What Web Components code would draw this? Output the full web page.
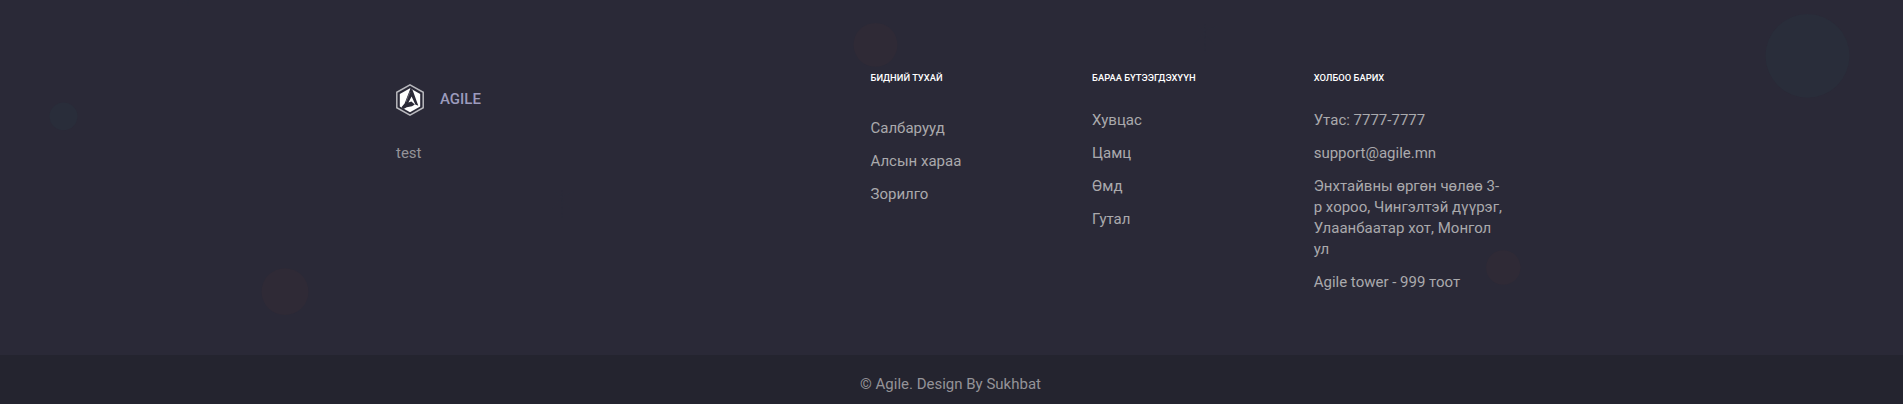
<!DOCTYPE html>
<html lang="mn"><head><meta charset="utf-8"><title>Agile</title>
<style>body{margin:0;background:#2a2937;font-family:Roboto,sans-serif;overflow:hidden}</style></head>
<body>
<agile-footer>
  <agile-brand slot="brand" name="AGILE">test</agile-brand>
  <footer-column slot="links" class="about" heading="Бидний тухай" style="--gap:33px">
    <footer-item>Салбарууд</footer-item><footer-item>Алсын хараа</footer-item><footer-item>Зорилго</footer-item>
  </footer-column>
  <footer-column slot="links" heading="Бараа бүтээгдэхүүн">
    <footer-item>Хувцас</footer-item><footer-item>Цамц</footer-item><footer-item>Өмд</footer-item><footer-item>Гутал</footer-item>
  </footer-column>
  <footer-column slot="links" heading="Холбоо барих">
    <footer-item>Утас: 7777-7777</footer-item><footer-item>support@agile.mn</footer-item><footer-item>Энхтайвны өргөн чөлөө 3-р хороо, Чингэлтэй дүүрэг, Улаанбаатар хот, Монгол ул</footer-item><footer-item>Agile tower - 999 тоот</footer-item>
  </footer-column>
  <span slot="copyright">© Agile. Design By Sukhbat</span>
</agile-footer>
<script>
const define = (name, html, setup) => customElements.define(name, class extends HTMLElement {
  constructor() {
    super();
    const t = document.createElement('template');
    t.innerHTML = html;
    this.attachShadow({mode: 'open'}).append(t.content.cloneNode(true));
  }
  connectedCallback() { if (setup) setup(this, this.shadowRoot); }
});

define('footer-backdrop', `<style>:host{position:absolute;inset:0;z-index:0}svg{display:block;width:100%;height:100%}</style>
<svg viewBox="0 0 1903 356" preserveAspectRatio="none">
<g fill="#2f2a36"><circle cx="285" cy="292.5" r="23.5"/><circle cx="875.5" cy="45" r="22"/><circle cx="1503.3" cy="268.3" r="17.3"/></g>
<g fill="#292d3a"><circle cx="63.5" cy="116.7" r="14"/><circle cx="1807.5" cy="56" r="42"/></g>
<g fill="none" stroke="#292b39" stroke-dasharray="1 1.6">
<path id="r" d="M562 191v27M561 199l-10 11M561 199l10 11M561 197l-8-6M561 197l14-5"/>
<use href="#r" x="643" y="-166"/><path d="M188 0v6M186 0l-4 4"/></g></svg>`);

define('agile-brand', `<style>:host{display:block}.top{display:flex;align-items:center;gap:16px;height:32px}
svg{width:28px;height:32px;flex:none}b{font-weight:500;font-size:15px;line-height:21px;color:#9c9bbd;position:relative;top:-1px}
p{margin:27px 0 0;font-size:15px;line-height:21px;color:#949398}</style>
<div class="top"><svg viewBox="0 0 28 32"><path d="M14 .9 27.2 8.3V23.7L14 31.1.8 23.7V8.3Z" fill="#2a2937" stroke="#b9b9be" stroke-width="1.5"/>
<path d="M14 4.2 24.2 9.9V22.4L14 28.2 3.8 22.4V9.9Z" fill="#fff"/>
<path d="M14.6 4 16.8 6.5 22.3 21.8 19.3 20.6 15.6 12.4 12.4 18.6 15.4 17.6 18.8 20.4 16 22.2 10.8 23.2 7.6 25 5.4 23.2 8.6 19.6Z" fill="#2a2937"/>
<path d="M14 8 10 18" stroke="#777680" stroke-width=".7"/></svg><b></b></div><p><slot></slot></p>`,
 (el, root) => root.querySelector('b').textContent = el.getAttribute('name'));

define('footer-column', `<style>:host{display:block;padding:0 15px}h6{margin:0 0 var(--gap,25px);font-size:9.38px;line-height:14px;font-weight:500;color:#fff;text-transform:uppercase;white-space:nowrap}
.list{display:flex;flex-direction:column;gap:12px}</style><h6></h6><div class="list"><slot></slot></div>`,
 (el, root) => root.querySelector('h6').textContent = el.getAttribute('heading'));

define('footer-item', `<style>:host{display:block;font-size:15px;line-height:21px;color:#aaaaad}</style><slot></slot>`);

define('agile-footer', `<style>:host{display:block}
.main{position:relative;height:355px;background:#2a2937;box-sizing:border-box;padding:71px 1px 0 0}
.grid{position:relative;z-index:1;width:1140px;margin:0 auto;display:grid;grid-template-columns:474.5px repeat(3,221.6px)}
.brand{padding:13px 15px 0}
.bottom{height:49px;box-sizing:border-box;padding:19px 2px 0 0;background:#24242f;text-align:center;font-size:15px;line-height:21px;color:#949398}</style>
<div class="main"><footer-backdrop></footer-backdrop><div class="grid"><div class="brand"><slot name="brand"></slot></div><slot name="links"></slot></div></div>
<div class="bottom"><slot name="copyright"></slot></div>`);
</script>
</body></html>
